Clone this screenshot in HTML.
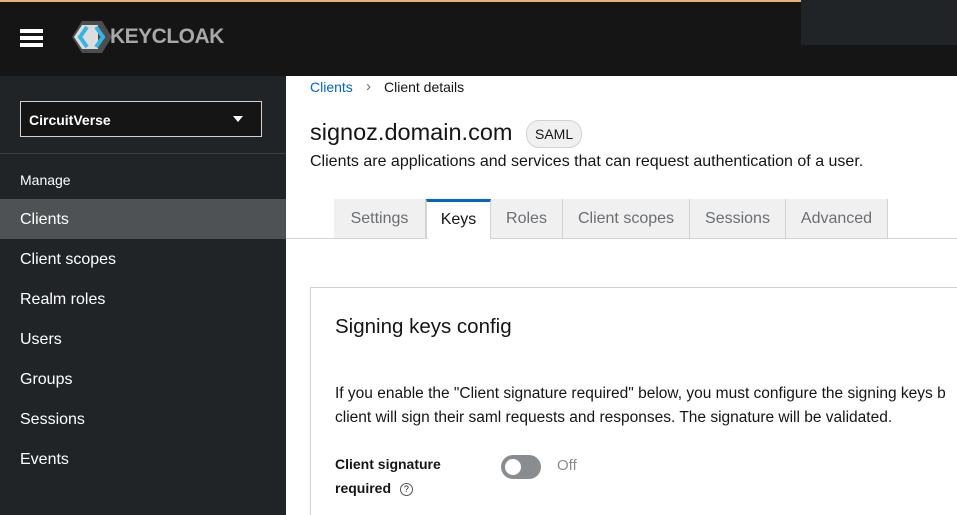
<!DOCTYPE html><html style="overflow:hidden"><head><style>
body{margin:0;width:957px;height:515px;overflow:hidden;font-family:"Liberation Sans",sans-serif;background:#fff;position:relative}
.hdr{position:absolute;left:0;top:0;width:957px;height:76px;background:#151515;border-top:2px solid #e8b07a;box-sizing:border-box}
.box{position:absolute;left:801px;top:0;width:156px;height:45px;background:#212427}
.side{position:absolute;left:0;top:76px;width:286px;height:439px;background:#212427;color:#fff}
.sel{position:absolute;left:20px;top:25px;width:242px;height:36px;border:1px solid #d2d2d2;background:#151515;font-weight:bold;font-size:14px;line-height:36px;padding-left:8px;box-sizing:border-box}
.sel:after{content:"";position:absolute;right:18px;top:14px;border:5px solid transparent;border-top:6px solid #fff;border-bottom:0}
.sep{position:absolute;left:0;top:77px;width:286px;border-top:1px solid #3c3f42}
.nav{position:absolute;left:0;width:286px;height:40px;line-height:40px;padding-left:20px;box-sizing:border-box;font-size:16px}
.t{position:absolute;white-space:nowrap}
.tab{position:absolute;top:199px;height:39px;background:#f0f0f0;border-right:1px solid #d2d2d2;box-sizing:border-box;line-height:40px;text-align:center;font-size:16px;color:#6a6e73}
</style></head><body>
<div class="hdr"></div><div class="box"></div>
<div class="t" style="left:20px;top:29px;width:23px;height:4px;background:#fff;box-shadow:0 7px 0 #fff,0 14px 0 #fff"></div>
<svg class="t" style="left:72px;top:19px" width="40" height="36" viewBox="0 0 40 36"><polygon points="10,2 30,2 40,18 30,34 10,34 0,18" fill="#4d4d4d"/><polygon points="2,18 10,6 26,6 26,30 10,30" fill="#ddd"/><path d="M15 8 L8 18 L15 28 M24 8 L31 18 L24 28" stroke="#33b6e6" stroke-width="4" fill="none"/></svg>
<div class="t" style="left:110px;top:25px;font-size:21px;font-weight:bold;color:#a8a8a8;letter-spacing:-0.5px">KEYCLOAK</div>
<div class="side">
<div class="sel">CircuitVerse</div><div class="sep"></div>
<div class="nav" style="top:92px;height:24px;line-height:24px;font-size:14px">Manage</div>
<div class="nav" style="top:123px;background:#4f5255;line-height:42px">Clients</div>
<div class="nav" style="top:163px;line-height:42px">Client scopes</div>
<div class="nav" style="top:203px;line-height:42px">Realm roles</div>
<div class="nav" style="top:243px;line-height:42px">Users</div>
<div class="nav" style="top:283px;line-height:42px">Groups</div>
<div class="nav" style="top:323px;line-height:42px">Sessions</div>
<div class="nav" style="top:363px;line-height:42px">Events</div>
</div>
<div class="t" style="left:310px;top:79px;font-size:14px;color:#0066cc">Clients</div>
<div class="t" style="left:366px;top:78px;font-size:15px;color:#6a6e73">›</div>
<div class="t" style="left:384px;top:79px;font-size:14px;color:#151515">Client details</div>
<div class="t" style="left:310px;top:119px;font-size:23.5px;color:#151515">signoz.domain.com</div>
<div class="t" style="left:526px;top:120px;height:26px;padding:0 8px;border:1px solid #d2d2d2;border-radius:13px;background:#f0f0f0;font-size:14px;line-height:26px;color:#151515">SAML</div>
<div class="t" style="left:310px;top:153px;font-size:16px;color:#151515">Clients are applications and services that can request authentication of a user.</div>
<div class="t" style="left:286px;top:238px;width:671px;border-top:1px solid #d2d2d2"></div>
<div class="tab" style="left:334px;width:92px">Settings</div>
<div class="tab" style="left:426px;width:65px;background:#fff;border-top:3px solid #0066cc;border-left:1px solid #d2d2d2;height:40px;line-height:36px;color:#151515">Keys</div>
<div class="tab" style="left:491px;width:72px">Roles</div>
<div class="tab" style="left:563px;width:127px">Client scopes</div>
<div class="tab" style="left:690px;width:96px">Sessions</div>
<div class="tab" style="left:786px;width:102px">Advanced</div>
<div class="t" style="left:310px;top:287px;width:660px;height:230px;border:1px solid #d2d2d2;border-bottom:0"></div>
<div class="t" style="left:335px;top:315px;font-size:20.5px;color:#151515">Signing keys config</div>
<div class="t" style="left:335px;top:382px;font-size:15.5px;line-height:24px;color:#151515">If you enable the "Client signature required" below, you must configure the signing keys b<br>client will sign their saml requests and responses. The signature will be validated.</div>
<div class="t" style="left:335px;top:452px;font-size:14px;font-weight:bold;line-height:24px;color:#151515">Client signature<br>required <span style="display:inline-block;width:11px;height:11px;border:1px solid #555;border-radius:50%;font-size:9px;line-height:11px;text-align:center;font-weight:normal;margin-left:5px;vertical-align:1px">?</span></div>
<div class="t" style="left:501px;top:455px;width:40px;height:24px;border-radius:12px;background:#8a8d90"></div>
<div class="t" style="left:505px;top:459px;width:16px;height:16px;border-radius:50%;background:#fff"></div>
<div class="t" style="left:557px;top:457px;font-size:15px;color:#8a8d90">Off</div>
</body></html>
